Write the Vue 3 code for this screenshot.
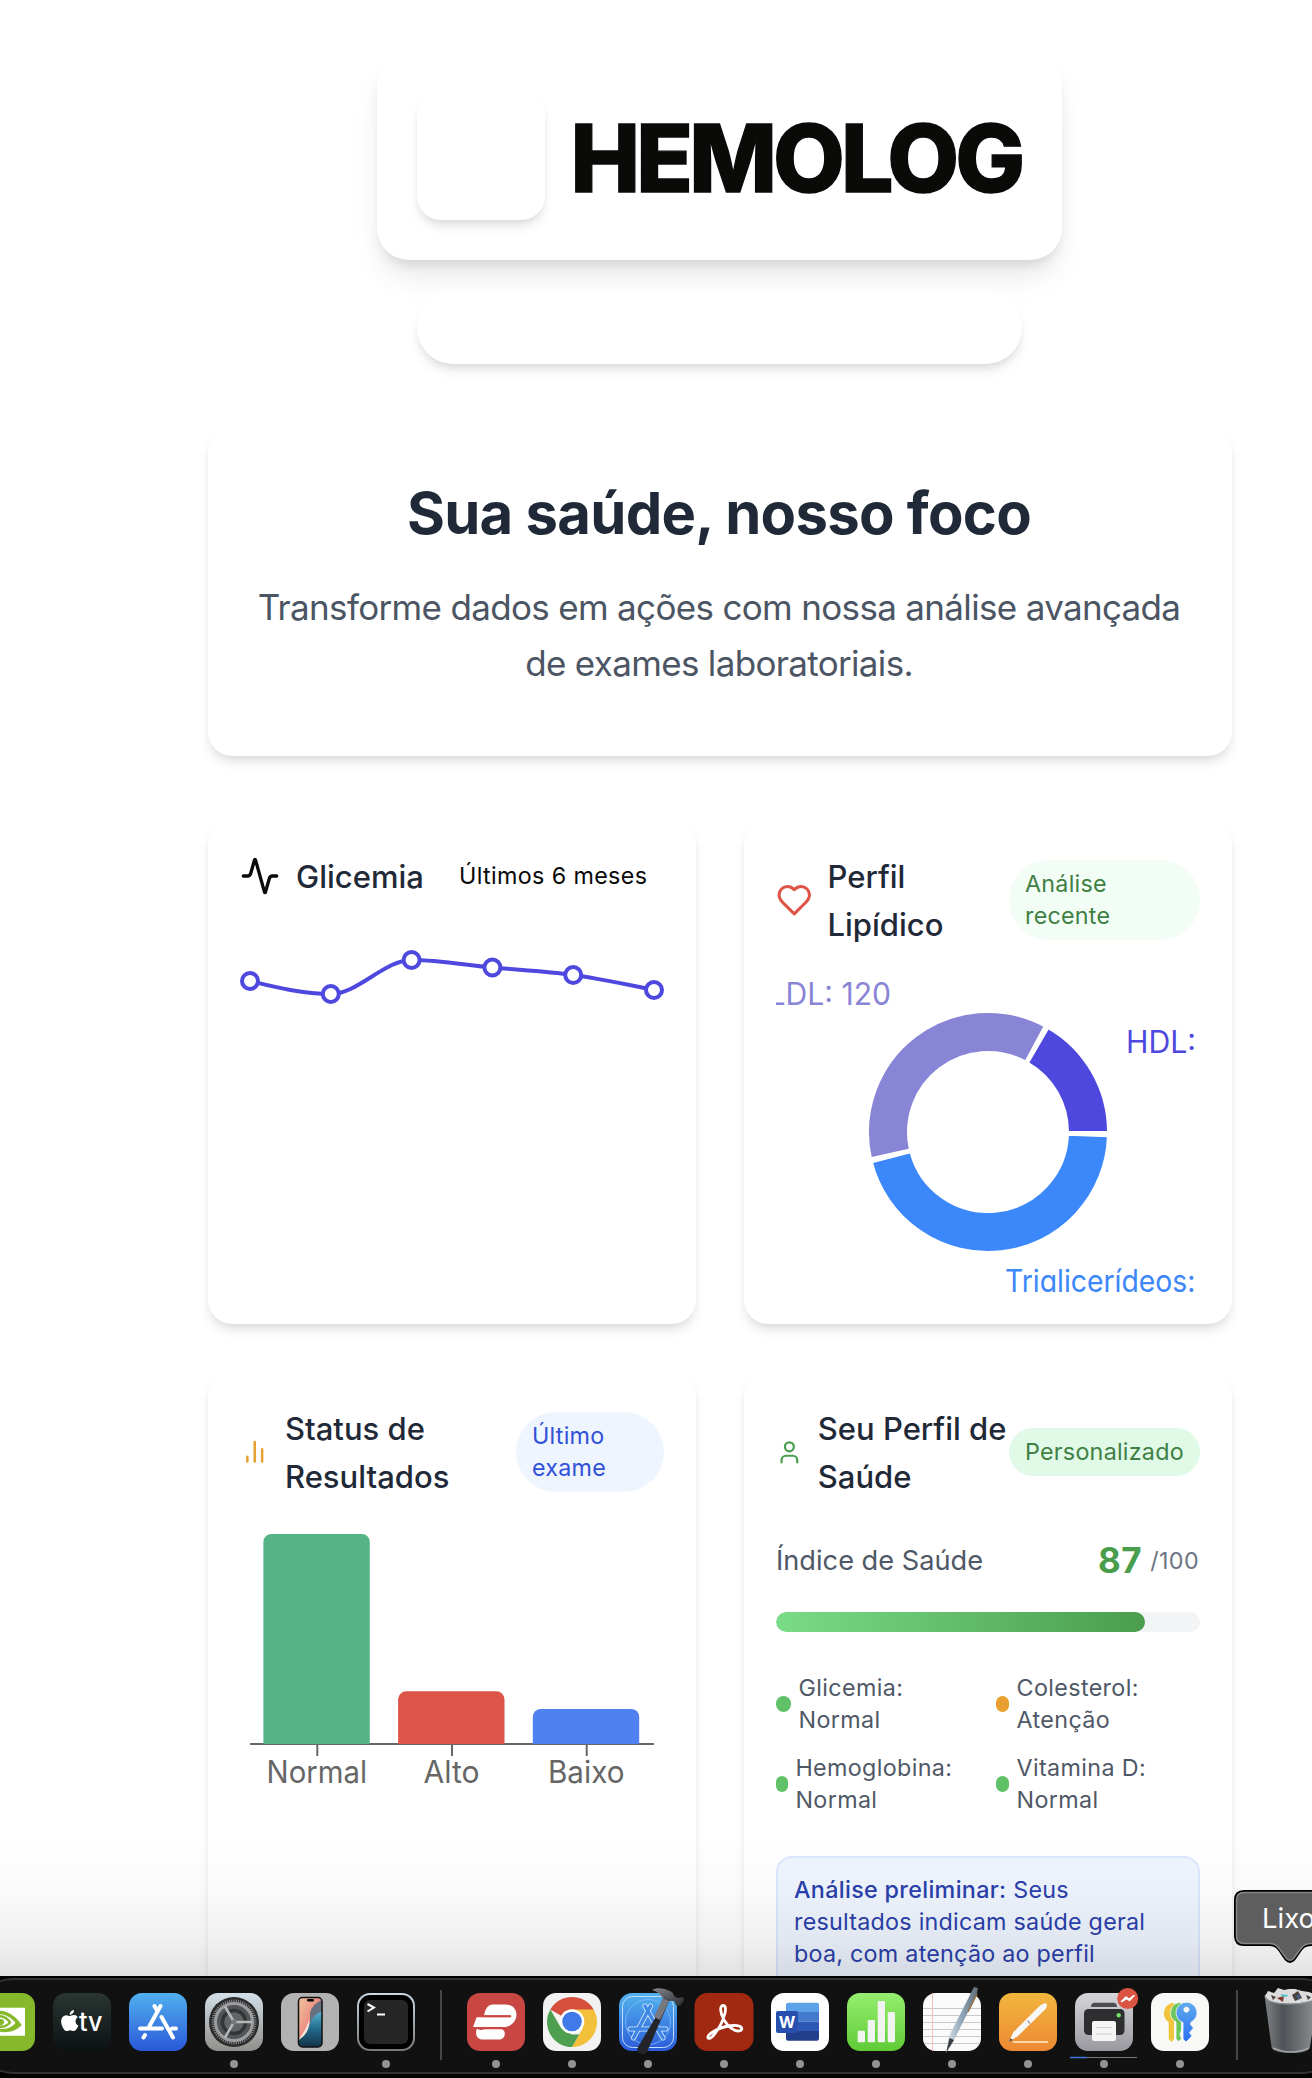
<script setup>
const glucose = [
  [10, 57], [90.8, 70], [171.6, 36], [252.4, 43.5], [333.2, 51], [414, 66],
]

// Monotone cubic interpolation through the glucose readings
function monotonePath(points) {
  const slopes = []
  for (let i = 0; i < points.length - 1; i++) {
    slopes.push((points[i + 1][1] - points[i][1]) / (points[i + 1][0] - points[i][0]))
  }
  const t = points.map((p, i) => {
    if (i === 0 || i === points.length - 1) return null
    const a = slopes[i - 1]
    const b = slopes[i]
    return (Math.sign(a) + Math.sign(b)) * Math.min(Math.abs(a), Math.abs(b), 0.25 * Math.abs(a + b)) || 0
  })
  t[0] = (3 * slopes[0] - t[1]) / 2
  t[t.length - 1] = (3 * slopes[slopes.length - 1] - t[t.length - 2]) / 2
  let d = `M${points[0]}`
  for (let i = 0; i < points.length - 1; i++) {
    const [x0, y0] = points[i]
    const [x1, y1] = points[i + 1]
    const dx = (x1 - x0) / 3
    d += `C${x0 + dx},${y0 + dx * t[i]},${x1 - dx},${y1 - dx * t[i + 1]},${x1},${y1}`
  }
  return d
}
const glucosePath = monotonePath(glucose)

function sector(from, to) {
  const pt = (r, a) => {
    const rad = (a * Math.PI) / 180
    return `${(212 + r * Math.cos(rad)).toFixed(2)},${(160 - r * Math.sin(rad)).toFixed(2)}`
  }
  return `M${pt(120, from)}A120,120,0,0,0,${pt(120, to)}L${pt(80, to)}A80,80,0,0,1,${pt(80, from)}Z`
}
const sectors = [
  { d: sector(0, 59.9), color: '#4e48df' },
  { d: sector(61.9, 192.6), color: '#8885d6' },
  { d: sector(194.6, 358), color: '#3c87f9' },
]

const results = [
  { label: 'Normal', x: 23.4, y: 10, color: '#55b483', tick: 77.3, len: 97.5 },
  { label: 'Alto', x: 158.1, y: 167.3, color: '#dd5549', tick: 212, len: 53 },
  { label: 'Baixo', x: 292.8, y: 185, color: '#4f81f1', tick: 346.7, len: 73.5 },
]
function bar({ x, y }) {
  return `M${x},220V${y + 8}a8,8,0,0,1,8,-8h90.4a8,8,0,0,1,8,8V220Z`
}

const markers = [
  { name: 'Glicemia:', state: 'Normal', tone: 'ok', w: 15, gap: 7.6 },
  { name: 'Colesterol:', state: 'Atenção', tone: 'warn', w: 13, gap: 7.6 },
  { name: 'Hemoglobina:', state: 'Normal', tone: 'ok', w: 12, gap: 7.4 },
  { name: 'Vitamina D:', state: 'Normal', tone: 'ok', w: 13, gap: 7.6 },
]
const score = 87
const teeth = Array.from({ length: 60 }, (_, i) => i * 6)
</script>

<template>
  <div class="screen">
    <main class="page">
      <section class="brand">
        <div class="brand-icon"></div>
        <h1>HEMOLOG</h1>
      </section>
      <div class="tagline"></div>

      <section class="hero">
        <h2>Sua saúde, nosso foco</h2>
        <p>Transforme dados em ações com nossa análise avançada<br>de exames laboratoriais.</p>
      </section>

      <section class="grid">
        <article class="card">
          <header class="one-line">
            <svg class="ico ico-activity" viewBox="0 0 24 24"><path d="M22 12h-2.48a2 2 0 0 0-1.93 1.46l-2.35 8.36a.25.25 0 0 1-.48 0L9.24 2.18a.25.25 0 0 0-.48 0l-2.35 8.36A2 2 0 0 1 4.49 12H2" /></svg>
            <h3>Glicemia</h3>
            <span class="pill plain">Últimos 6 meses</span>
          </header>
          <svg class="chart" viewBox="0 0 424 320">
            <path :d="glucosePath" fill="none" stroke="#4e48df" stroke-width="4" />
            <circle v-for="p in glucose" :key="p[0]" :cx="p[0]" :cy="p[1]" r="8" fill="#fff" stroke="#4e48df" stroke-width="4" />
          </svg>
        </article>

        <article class="card">
          <header>
            <svg class="ico ico-heart" viewBox="0 0 24 24"><path d="M19 14c1.49-1.46 3-3.21 3-5.5A5.5 5.5 0 0 0 16.5 3c-1.76 0-3 .5-4.5 2-1.5-1.5-2.74-2-4.5-2A5.5 5.5 0 0 0 2 8.5c0 2.3 1.5 4.05 3 5.5l7 7Z" /></svg>
            <h3>Perfil<br>Lipídico</h3>
            <span class="pill mint">Análise<br>recente</span>
          </header>
          <svg class="chart" viewBox="0 0 424 320">
            <path v-for="s in sectors" :key="s.color" :d="s.d" :fill="s.color" stroke="#fff" stroke-width="2" />
            <text x="-7.500" y="32.500" textLength="122.500" lengthAdjust="spacingAndGlyphs" fill="#8885d6">LDL: 120</text>
            <text x="350" y="80.700" textLength="70" lengthAdjust="spacingAndGlyphs" fill="#4e48df">HDL:</text>
            <text x="229" y="320" textLength="190.500" lengthAdjust="spacingAndGlyphs" fill="#3c87f9">Triglicerídeos:</text>
          </svg>
        </article>

        <article class="card tall">
          <header>
            <svg class="ico ico-bars" viewBox="0 0 24 24"><path d="M12 20V4M18 20V10M6 20v-4" /></svg>
            <h3>Status de<br>Resultados</h3>
            <span class="pill sky">Último<br>exame</span>
          </header>
          <svg class="chart" viewBox="0 0 424 320">
            <path d="M10 220H414" stroke="#666" stroke-width="2" />
            <g v-for="r in results" :key="r.label">
              <path :d="bar(r)" :fill="r.color" />
              <path :d="`M${r.tick},221v11`" stroke="#666" stroke-width="2" />
              <text :x="r.tick - 0.5" y="258.700" text-anchor="middle" :textLength="r.len + 3" lengthAdjust="spacingAndGlyphs" fill="#666">{{ r.label }}</text>
            </g>
          </svg>
        </article>

        <article class="card tall">
          <header>
            <svg class="ico ico-user" viewBox="0 0 24 24"><path d="M19 21v-2a4 4 0 0 0-4-4H9a4 4 0 0 0-4 4v2" /><circle cx="12" cy="7" r="4" /></svg>
            <h3>Seu Perfil de<br>Saúde</h3>
            <span class="pill green">Personalizado</span>
          </header>
          <div class="score">
            <span class="score-label">Índice de Saúde</span>
            <strong>{{ score }}</strong>
            <span class="score-max">/100</span>
          </div>
          <div class="track"><div class="fill" :style="{ width: score + '%' }"></div></div>
          <div class="markers">
            <div v-for="m in markers" :key="m.name" class="marker">
              <i :class="m.tone" :style="{ width: m.w + 'px', marginRight: m.gap + 'px' }"></i>
              <span>{{ m.name }}<br>{{ m.state }}</span>
            </div>
          </div>
          <p class="note"><b>Análise preliminar:</b> Seus<br>resultados indicam saúde geral<br>boa, com atenção ao perfil<br>lipídico.</p>
        </article>
      </section>
    </main>

    <div class="shade"></div>

    <div class="tip">
      <svg viewBox="0 0 130 76" width="130" height="76">
        <path d="M11 2H128V54H78C71 54 69 57 66 61L60.500 69Q57 73 53.500 69L48 61C45 57 43 54 36 54H11Q3 54 3 46V10Q3 2 11 2Z" fill="#5e5e5e" stroke="#000" stroke-width="4" />
        <path d="M11 2.500H128V53.500H78C71 53.500 69 57 66 61L60.500 68.500Q57 72 53.500 68.500L48 61C45 57 43 53.500 36 53.500H11Q3.500 53.500 3.500 46V10Q3.500 2.500 11 2.500Z" fill="#5e5e5e" stroke="#858585" stroke-width="1.500" />
      </svg>
      <span>Lixo</span>
    </div>

    <nav class="dock">
      <div class="shelf">
        <div class="app">
          <svg viewBox="0 0 58 58">
            <rect width="58" height="58" rx="13" fill="#86b82c" />
            <path d="M8 14.700H48V42.700H8Z" fill="#fff" />
            <path d="M18 18C29 16 38 22 44.700 32C38 39 29 40.500 18 38" fill="#86b82c" />
            <path d="M18 21.500C27 20 34 24 38.500 30C33 36 27 37 18 35" fill="#fff" />
            <path d="M18 24C25 22 30 25 33 29.500C29 34 24 35 18 32" fill="none" stroke="#86b82c" stroke-width="2.500" />
            <circle cx="24" cy="29" r="3" fill="#86b82c" />
          </svg>
        </div>
        <div class="app">
          <svg viewBox="0 0 58 58">
            <defs><linearGradient id="tv" x2="0" y2="1"><stop stop-color="#2a3633" /><stop offset="1" stop-color="#0c1113" /></linearGradient></defs>
            <rect width="58" height="58" rx="13" fill="url(#tv)" />
            <path transform="translate(6.200 17) scale(.88)" fill="#fff" d="M12.152 6.896c-.948 0-2.415-1.078-3.96-1.04-2.04.027-3.91 1.183-4.961 3.014-2.117 3.675-.546 9.103 1.519 12.09 1.013 1.454 2.208 3.09 3.792 3.039 1.52-.065 2.09-.987 3.935-.987 1.831 0 2.35.987 3.96.948 1.637-.026 2.676-1.48 3.676-2.948 1.156-1.688 1.636-3.325 1.662-3.415-.039-.013-3.182-1.221-3.22-4.857-.026-3.04 2.48-4.494 2.597-4.559-1.429-2.09-3.623-2.324-4.39-2.376-2-.156-3.675 1.09-4.61 1.09zM15.53 3.83c.843-1.012 1.4-2.427 1.245-3.83-1.207.052-2.662.805-3.532 1.818-.78.896-1.454 2.338-1.273 3.714 1.338.104 2.715-.688 3.559-1.701" />
            <text x="26" y="38" font-size="26" font-weight="500" textLength="23.500" lengthAdjust="spacingAndGlyphs" fill="#fff">tv</text>
          </svg>
        </div>
        <div class="app">
          <svg viewBox="0 0 58 58">
            <defs><linearGradient id="store" x2="0" y2="1"><stop stop-color="#51b0ee" /><stop offset="1" stop-color="#2a59d9" /></linearGradient></defs>
            <rect width="58" height="58" rx="13" fill="url(#store)" />
            <g stroke="#fff" stroke-width="4" stroke-linecap="round" fill="none">
              <path d="M11 35.500H33M43 35.500H47M31.500 13L20.500 33M16 42L14.500 44.500M25.500 13L28 17.500M32.500 24L44 44.500" />
            </g>
          </svg>
        </div>
        <div class="app">
          <svg viewBox="0 0 58 58">
            <defs><linearGradient id="set" x2="0" y2="1"><stop stop-color="#d3dfe8" /><stop offset="1" stop-color="#918f8b" /></linearGradient></defs>
            <rect width="58" height="58" rx="13" fill="url(#set)" />
            <circle cx="29" cy="29" r="25" fill="#2b2b2c" />
            <g stroke="#8d8f91" stroke-width="1"><path v-for="a in teeth" :key="a" d="M29 6.500V9.500" :transform="`rotate(${a} 29 29)`" /></g>
            <circle cx="29" cy="29" r="18.500" fill="#525456" stroke="#9a9c9e" stroke-width="3" />
            <circle cx="29" cy="29" r="11.500" fill="#626466" stroke="#333435" stroke-width="3.500" />
            <path d="M29 29H47M29 29L20 13.500M29 29L20 44.500" stroke="#b5b7b9" stroke-width="2.500" />
            <circle cx="29" cy="29" r="2.500" fill="#77797b" />
          </svg>
          <i></i>
        </div>
        <div class="app">
          <svg viewBox="0 0 58 58">
            <defs>
              <linearGradient id="sand" x2="1" y2="1"><stop stop-color="#efc79c" /><stop offset=".5" stop-color="#ec8a82" /><stop offset="1" stop-color="#f3c1b3" /></linearGradient>
              <linearGradient id="sea" x2="0" y2="1"><stop stop-color="#58b4cf" /><stop offset=".5" stop-color="#236a8b" /><stop offset="1" stop-color="#12334a" /></linearGradient>
            </defs>
            <rect width="58" height="58" rx="13" fill="#b2b2b2" />
            <rect x="17.500" y="4.500" width="23.500" height="49.500" rx="4" fill="url(#sand)" />
            <path d="M29 20Q31 11 41 7V22L29 32Z" fill="#66707f" />
            <path d="M18 46Q26 35 28 27V40L18 50Z" fill="#f7e5da" />
            <path d="M41 18Q30 23 28 33Q26 42 18 47V52Q20 54 22 54H37Q41 54 41 50Z" fill="url(#sea)" />
            <rect x="17.500" y="4.500" width="23.500" height="49.500" rx="4" fill="none" stroke="#111" stroke-width="1.500" />
            <rect x="26" y="6" width="7" height="2.500" rx="1.200" />
          </svg>
        </div>
        <div class="app">
          <svg viewBox="0 0 58 58">
            <defs><linearGradient id="term" x2="0" y2="1"><stop stop-color="#c9dbe6" /><stop offset="1" stop-color="#777" /></linearGradient></defs>
            <rect width="58" height="58" rx="13" fill="url(#term)" />
            <rect x="2" y="2" width="54" height="54" rx="11" fill="#000" />
            <rect x="7" y="7" width="44" height="44" rx="6" fill="#262626" />
            <path d="M10.500 11L17 14.500L10.500 18.500M20 21.500H28" fill="none" stroke="#fff" stroke-width="2" />
          </svg>
          <i></i>
        </div>
        <span class="sep"></span>
        <div class="app">
          <svg viewBox="0 0 58 58">
            <rect width="58" height="58" rx="13" fill="#c84743" />
            <path d="M17 22.500C18 16 21 11.500 26 11.500H38.500C51 11.500 52 25 45.500 30.500C42.500 33.500 40 34 36 34H6L9.700 24.300H43.500Q45 23.400 43.500 22.500ZM10 35.500C12 37.500 14 37 18 36.300H33.500C40 36.300 39 46.500 32 46.500H16C9 46.500 8 40 10 35.500Z" fill="#fff" />
            <path d="M16 23.200H44" stroke="#c84743" stroke-width="2" />
          </svg>
          <i></i>
        </div>
        <div class="app">
          <svg viewBox="0 0 58 58">
            <rect width="58" height="58" rx="13" fill="#f2f2f2" />
            <path d="M29 29L7.350 16.500A25 25 0 0 1 50.650 16.500Z" fill="#d64f3c" />
            <path d="M29 16.500H50.650A25 25 0 0 1 29 54L39.800 35.200Z" fill="#f3c03c" />
            <path d="M7.350 16.500L18.200 35.200L29 41.500H36.200L29 54A25 25 0 0 1 7.350 16.500Z" fill="#4f9f50" />
            <circle cx="29" cy="28.500" r="12.300" fill="#fff" /><circle cx="29" cy="28.500" r="9.800" fill="#4079e8" />
          </svg>
          <i></i>
        </div>
        <div class="app">
          <svg viewBox="0 0 58 58">
            <defs>
              <linearGradient id="xc" x2="0" y2="1"><stop stop-color="#53b3ee" /><stop offset="1" stop-color="#2c5ad9" /></linearGradient>
              <linearGradient id="ham" x2="1" y2="1"><stop stop-color="#85878d" /><stop offset="1" stop-color="#292a2f" /></linearGradient>
            </defs>
            <rect width="58" height="58" rx="13" fill="url(#xc)" />
            <rect x="3.500" y="3.500" width="51" height="51" rx="10" fill="none" stroke="#bfe0f8" />
            <circle cx="29" cy="29" r="22.500" fill="none" stroke="#7dbdf1" stroke-width=".8" />
            <g stroke="#d8ecfb" stroke-width="5" stroke-linecap="round"><path d="M11 36H47M31.500 13L14.500 45M26 13L44 45" /></g>
            <g stroke="#3f86e4" stroke-width="3.400" stroke-linecap="round"><path d="M11 36H47M31.500 13L14.500 45M26 13L44 45" /></g>
            <path d="M45 3L51 6L28 59Q25 63 20 60Q17 58 19 54L38 22Z" fill="#24252b" />
            <path d="M44 5L50 8L41 27L35 24Z" fill="#77797f" />
            <path d="M33 -3C38 -6 46 -5 53 -1L56 4L60 5L64 4L65 7L61 13L57 12L55 8L50 8L43 4Q40 -1 33 -3Z" fill="url(#ham)" />
          </svg>
          <i></i>
        </div>
        <div class="app">
          <svg viewBox="0 0 58 58">
            <rect x="-.5" width="59" height="58" rx="13" fill="#a12912" />
            <path d="M28 12.500C24.500 12.500 25 20 29 27C33 33.500 39 38.500 44 38C49 37 47.500 32 38 32.500C30 33 21 36.500 15.500 40.500C10.500 44.500 13.500 47.500 17.500 43.500C22.500 38 28 28 30 20C31 15 30.500 12.500 28 12.500Z" fill="none" stroke="#fff" stroke-width="2.800" stroke-linejoin="round" />
          </svg>
          <i></i>
        </div>
        <div class="app">
          <svg viewBox="0 0 58 58">
            <rect width="58" height="58" rx="13" fill="#fff" />
            <path d="M17 9.700H46Q48 9.700 48 11.700V19H15V11.700Q15 9.700 17 9.700Z" fill="#5ca2e8" />
            <path d="M15 19H48V28.500H15Z" fill="#437bcc" /><path d="M15 28.500H48V38H15Z" fill="#2c59b6" />
            <path d="M15 38H48V45.700Q48 47.700 46 47.700H17Q15 47.700 15 45.700Z" fill="#223f8b" />
            <rect x="5" y="18" width="22" height="22" rx="2" fill="#264fae" />
            <text x="16" y="35" text-anchor="middle" font-size="16" font-weight="700" fill="#fff">W</text>
          </svg>
          <i></i>
        </div>
        <div class="app">
          <svg viewBox="0 0 58 58">
            <defs><linearGradient id="num" x2="0" y2="1"><stop stop-color="#95ee6f" /><stop offset="1" stop-color="#5fcb36" /></linearGradient></defs>
            <rect width="58" height="58" rx="13" fill="url(#num)" />
            <g fill="#f0f3f0"><rect x="10.700" y="37.700" width="7.300" height="11.600" rx="1" /><rect x="20.700" y="27" width="7.300" height="22.300" rx="1" /><rect x="30.700" y="8" width="7.300" height="41.300" rx="1" /><rect x="40.700" y="19" width="7.300" height="30.300" rx="1" /></g>
          </svg>
          <i></i>
        </div>
        <div class="app">
          <svg viewBox="0 0 58 58">
            <defs><linearGradient id="pen"><stop stop-color="#dbe6ee" /><stop offset=".5" stop-color="#8fa5b7" /><stop offset="1" stop-color="#5d6a75" /></linearGradient></defs>
            <rect width="58" height="58" rx="13" fill="#fbfbfb" />
            <path d="M0 15.500H58M0 22.500H58M0 29.500H58M0 36.500H58M0 43.500H58M2 50.500H56" stroke="#c9c9c9" stroke-width="1" />
            <path d="M9.500 0V58" stroke="#f3c0bd" stroke-width="1" />
            <path d="M49 -2L51 -6L55 -5L54 1L32 45L23 60L26 43Z" fill="url(#pen)" />
            <path d="M54 1L45 19" stroke="#9b7347" stroke-width="1.500" />
            <path d="M26.500 45L31 47L23 60Z" fill="#3c4045" />
          </svg>
          <i></i>
        </div>
        <div class="app">
          <svg viewBox="0 0 58 58">
            <defs><linearGradient id="pages" x2="0" y2="1"><stop stop-color="#f2b63d" /><stop offset="1" stop-color="#ec8933" /></linearGradient></defs>
            <rect width="58" height="58" rx="13" fill="url(#pages)" />
            <path d="M14 49H49" stroke="#f8d5a8" stroke-width="2" />
            <path d="M47.500 10.500Q49 13 45.500 17L19 43L9.500 49L14.500 39L40 13.500Q45 9.500 47.500 10.500Z" fill="#f7f7f7" />
            <path d="M28.500 27.500L31 30.500" stroke="#9b9b9b" stroke-width="1.200" /><path d="M9.500 49L11.500 45L14 47Z" fill="#6e5a44" />
          </svg>
          <i></i>
        </div>
        <div class="app">
          <svg viewBox="0 0 58 58">
            <defs><linearGradient id="prn" x2="0" y2="1"><stop stop-color="#d6d5da" /><stop offset="1" stop-color="#9a999f" /></linearGradient></defs>
            <rect width="58" height="58" rx="13" fill="url(#prn)" />
            <path d="M16 14Q16 9.700 20 9.700H38Q42 9.700 42 14Z" fill="#4c4d50" />
            <rect x="9" y="16" width="40.500" height="26" rx="4.500" fill="#2d2e30" />
            <rect x="17" y="28" width="24" height="20" rx="2" fill="#f5f5f5" />
            <path d="M20.500 34.500H37.500M20.500 41H37.500" stroke="#cfcfcf" stroke-width="1" />
            <circle cx="43.700" cy="22.300" r="2.200" fill="#72e165" />
            <circle cx="52.700" cy="5.500" r="10.500" fill="#db5442" />
            <path d="M46.500 8.500L51 4L54 6.300L59 2.500L54.500 7.500L51.500 5.500Z" fill="#fff" stroke="#fff" stroke-width="1.500" stroke-linejoin="round" />
            <path d="M-5 64.500H62" stroke="#777" stroke-width="1" /><path d="M-5 64.500H12" stroke="#3e78d8" stroke-width="1.500" />
          </svg>
          <i></i>
        </div>
        <div class="app">
          <svg viewBox="0 0 58 58">
            <defs><linearGradient id="key" x2="0" y2="1"><stop stop-color="#5fabed" /><stop offset="1" stop-color="#2b6ff5" /></linearGradient></defs>
            <rect width="58" height="58" rx="13" fill="#f8f8f7" />
            <path d="M21 10A10.500 10.500 0 0 0 17.700 29V46L20.500 49L23 46V10Z" fill="#f0c43c" />
            <path d="M28 9.500A10.500 10.500 0 0 0 25 29V46L27.500 48.500L30.500 46L29 41L30.500 37V10Z" fill="#69c75c" stroke="#f8f8f7" stroke-width=".8" />
            <path fill-rule="evenodd" d="M35.500 9.200A10.500 10.500 0 0 0 32 29.600V46L35 49L41 43L38.500 39.500L42.500 35L39.500 31.500L40 29.200A10.500 10.500 0 0 0 35.500 9.200ZM35.500 14A2.600 2.600 0 1 1 35.400 14Z" fill="url(#key)" stroke="#f8f8f7" stroke-width=".8" />
          </svg>
          <i></i>
        </div>
        <span class="sep last"></span>
        <div class="app">
          <svg viewBox="0 0 58 58">
            <defs><linearGradient id="can"><stop stop-color="#7e8285" /><stop offset=".35" stop-color="#4f5357" /><stop offset=".7" stop-color="#717578" /><stop offset="1" stop-color="#8f9396" /></linearGradient></defs>
            <path d="M.5 2H54L46 54Q44 60 27 60Q9 60 7.500 54Z" fill="url(#can)" />
            <path d="M9 55Q27 63 45 55" fill="none" stroke="#a2a5a8" stroke-width="1.500" />
            <path d="M1 3L4 -2L10 0L14 -5L20 -3L25 -4L31 -4L38 -2L45 -1L52 2L50 7Q27 14 5 8Z" fill="#dcdcdc" />
            <path d="M7 2L12 4L9 7ZM28 2L34 -2L38 5L31 8ZM42 2L47 4L44 7Z" fill="#4b423f" /><path d="M13 5L20 3L19 9Z" fill="#7a3b30" /><path d="M17 1L24 2L23 4L17 3Z" fill="#54c6cf" /><path d="M32 3L36 2L35 6Z" fill="#406aa3" />
            <path d="M1 4Q5 11 27 11T54 4" fill="none" stroke="#8e9295" stroke-width="1.200" />
          </svg>
        </div>
      </div>
    </nav>
  </div>
</template>

<style>
body { margin: 0; background: #fff; }
</style>

<style scoped>
.screen {
  position: relative;
  width: 1312px;
  height: 2078px;
  overflow: hidden;
  background: #fff;
  font-family: Inter, "Liberation Sans", sans-serif;
  color: #1f2937;
}
.page {
  display: flex;
  flex-direction: column;
  align-items: center;
  width: 1024px;
  padding: 52px 0 0 208px;
}
h1, h2, h3, p { margin: 0; }

.brand {
  display: flex;
  align-items: center;
  gap: 24px;
  box-sizing: border-box;
  width: 685px;
  height: 208px;
  margin-right: 1px;
  padding: 40px;
  border-radius: 32px;
  background: #fff;
  box-shadow: 0 20px 30px -6px rgba(0, 0, 0, .1), 0 8px 12px -4px rgba(0, 0, 0, .1);
}
.brand-icon {
  flex: none;
  width: 128px;
  height: 128px;
  border-radius: 24px;
  box-shadow: 0 8px 12px -2px rgba(0, 0, 0, .1), 0 4px 8px -4px rgba(0, 0, 0, .1);
}
.brand h1 {
  padding: 4px 0 0 1.5px;
  font-size: 93px;
  line-height: 96px;
  font-weight: 800;
  letter-spacing: -3.85px;
  color: #0a0a09;
  -webkit-text-stroke: 1.3px #0a0a09;
}
.tagline {
  width: 605px;
  height: 72px;
  margin: 32px 1px 0 0;
  border-radius: 36px;
  background: #fff;
  box-shadow: 0 8px 12px -2px rgba(0, 0, 0, .1), 0 4px 8px -4px rgba(0, 0, 0, .1);
}
.hero {
  box-sizing: border-box;
  width: 1024px;
  height: 328px;
  margin-top: 64px;
  padding: 48px 2px 0 0;
  border-radius: 24px;
  text-align: center;
  box-shadow: 0 8px 12px -2px rgba(0, 0, 0, .1), 0 4px 8px -4px rgba(0, 0, 0, .1);
}
.hero h2 {
  font-size: 58px;
  line-height: 75px;
  font-weight: 700;
  letter-spacing: -.72px;
}
.hero p {
  margin-top: 28px;
  font-size: 35px;
  line-height: 56px;
  letter-spacing: -.67px;
  color: #4b5563;
}

.grid {
  display: grid;
  grid-template-columns: 488px 488px;
  grid-template-rows: 504px 760px;
  gap: 48px;
  height: 1150px;
  margin-top: 64px;
}
.card {
  box-sizing: border-box;
  padding: 32px;
  border-radius: 24px;
  background: #fff;
  box-shadow: 0 8px 12px -2px rgba(0, 0, 0, .1), 0 4px 8px -4px rgba(0, 0, 0, .1);
}
.card header {
  display: flex;
  align-items: center;
  height: 96px;
  margin-bottom: 24px;
}
.card header.one-line { height: 48px; }
.ico {
  flex: none;
  fill: none;
  stroke-width: 2;
  stroke-linecap: round;
  stroke-linejoin: round;
}
.ico-activity { width: 40px; height: 40px; margin-right: 16px; stroke: #0a0a0a; }
.ico-heart { width: 36.5px; height: 36.5px; margin-right: 15px; stroke: #de5447; }
.ico-bars { width: 29.5px; height: 29.5px; margin-right: 15.5px; stroke: #e7a02f; }
.ico-user { width: 26.8px; height: 26.8px; margin-right: 15px; stroke: #4a9f4f; }
.card h3 {
  padding-top: 2px;
  font-size: 31px;
  line-height: 48px;
  font-weight: 500;
  white-space: nowrap;
}
.pill {
  box-sizing: border-box;
  flex: none;
  margin-left: auto;
  padding: 8px 16px;
  border-radius: 40px;
  font-size: 23.3px;
  line-height: 32px;
  letter-spacing: .25px;
  white-space: nowrap;
}
.plain { width: 221px; letter-spacing: .36px; color: #0a0a0a; }
.mint { width: 191px; background: #f2fdf5; color: #3f8044; }
.sky { width: 148px; background: #eff5ff; color: #3152d8; }
.green { width: 191px; background: #e1f9e7; color: #3f8044; }

.chart { display: block; width: 424px; height: 320px; overflow: hidden; }
.chart text { font-size: 31px; }

.score {
  display: flex;
  align-items: center;
  height: 56px;
  padding: 8px 0 24px;
}
.score-label { font-size: 27.2px; color: #4f5866; }
.score strong { margin-left: auto; font-size: 35px; font-weight: 700; letter-spacing: .5px; color: #4a9d4c; }
.score-max { margin: 0 1px 0 8px; font-size: 23.3px; letter-spacing: .4px; color: #6e7583; }
.track { height: 20px; border-radius: 10px; overflow: hidden; background: #f3f4f6; }
.fill { height: 20px; border-radius: 10px; background: linear-gradient(90deg, #79dc86, #4a9d4c); }
.markers {
  display: grid;
  grid-template-columns: 204px 204px;
  gap: 16px;
  margin: 40px 0;
}
.marker {
  display: flex;
  align-items: center;
  font-size: 23.3px;
  line-height: 32px;
  letter-spacing: .36px;
  color: #4f5866;
  white-space: nowrap;
}
.marker i { flex: none; height: 16px; border-radius: 8px; }
.marker .ok { background: #60c166; }
.marker .warn { background: #e7a02f; }
.note {
  padding: 16px 0 16px 16px;
  border: 2px solid #dbe8fd;
  border-radius: 16px;
  background: #eff5ff;
  font-size: 23.3px;
  line-height: 32px;
  letter-spacing: .25px;
  color: #2a40ab;
}
.note b { font-weight: 500; letter-spacing: .33px; }

.shade {
  position: absolute;
  left: 0;
  right: 0;
  bottom: 102px;
  height: 140px;
  background: linear-gradient(rgba(0, 0, 0, 0), rgba(0, 0, 0, .018) 40%, rgba(0, 0, 0, .06) 75%, rgba(0, 0, 0, .115));
}
.tip { position: absolute; left: 1233px; top: 1890px; }
.tip svg { display: block; }
.tip span {
  position: absolute;
  left: 29px;
  top: 8px;
  font-size: 27.5px;
  line-height: 40px;
  color: #fff;
}
.dock {
  position: absolute;
  left: 0;
  right: 0;
  bottom: 0;
  height: 102px;
  overflow: hidden;
  background: #000;
}
.shelf {
  display: flex;
  gap: 18px;
  box-sizing: border-box;
  width: 1375px;
  height: 96px;
  margin: 2px 0 0 -30px;
  padding: 13px 0 0 5px;
  border: 2px solid #333;
  border-radius: 44px;
  background: #111;
}
.app {
  display: flex;
  flex: none;
  flex-direction: column;
  align-items: center;
  width: 58px;
}
.app svg { display: block; width: 58px; height: 58px; overflow: visible; }
.app i { width: 8px; height: 8px; margin-top: 9px; border-radius: 50%; background: #939393; }
.sep { flex: none; width: 2px; height: 70px; margin: -3px 7px 0; background: #474747; }
.sep.last { margin: -3px 8px 0 9px; }
</style>
